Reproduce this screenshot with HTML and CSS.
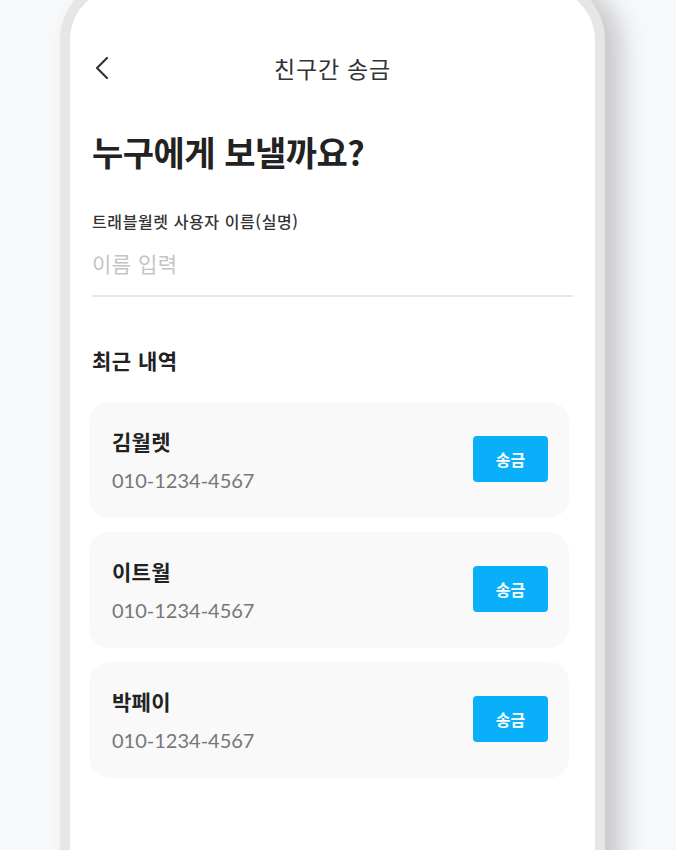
FILE: index.html
```html
<!DOCTYPE html>
<html lang="ko">
<head>
    <meta charset="UTF-8">
    <meta name="viewport" content="width=device-width, initial-scale=1.0">
    <title>친구간 송금</title>
    <link rel="stylesheet" href="styles.css">
</head>
<body>
    <div class="phone">
        <div class="screen">
            <header class="topbar">
                <button class="back" aria-label="뒤로">
                    <svg width="14" height="24" viewBox="0 0 14 24">
                        <polyline points="12,2 2,12 12,22" fill="none" stroke="#333" stroke-width="2.2" stroke-linecap="round" stroke-linejoin="round"/>
                    </svg>
                </button>
                <div class="topbar-title">친구간 송금</div>
            </header>

            <h1 class="heading">누구에게 보낼까요?</h1>

            <div class="field">
                <label for="name">트래블월렛 사용자 이름(실명)</label>
                <input type="text" id="name" placeholder="이름 입력">
            </div>

            <h2 class="section-title">최근 내역</h2>

            <!-- recent transfers -->
            <ul class="recent">
                <li class="card">
                    <div class="person">
                        <div class="person-name">김월렛</div>
                        <div class="person-phone">010-1234-4567</div>
                    </div>
                    <button class="send">송금</button>
                </li>
                <li class="card">
                    <div class="person">
                        <div class="person-name">이트월</div>
                        <div class="person-phone">010-1234-4567</div>
                    </div>
                    <button class="send">송금</button>
                </li>
                <li class="card">
                    <div class="person">
                        <div class="person-name">박페이</div>
                        <div class="person-phone">010-1234-4567</div>
                    </div>
                    <button class="send">송금</button>
                </li>
            </ul>
        </div>
    </div>
</body>
</html>
```

FILE: styles.css
```css
html, body {
    margin: 0;
    padding: 0;
    height: 100%;
    overflow: hidden;
}

body {
    background-color: #f7f8fa;
    font-family: "Noto Sans CJK KR", "Noto Sans", sans-serif;
    color: #222;
}

.phone {
    width: 525px;
    height: 900px;
    margin: -22px 0 0 60px;
    border: 10px solid #e6e6e6;
    border-bottom: none;
    border-radius: 62px 62px 0 0;
    background: #fff;
    box-shadow: 16px 6px 26px rgba(0, 0, 0, 0.2);
}

.screen {
    padding: 0 22px;
}

.topbar {
    position: relative;
    display: flex;
    align-items: center;
    justify-content: center;
    height: 52px;
    margin-top: 54px;
}

.back {
    position: absolute;
    left: 3px;
    top: 14px;
    padding: 0;
    border: none;
    background: none;
    line-height: 0;
}

.topbar-title {
    font-size: 23px;
    color: #333;
    letter-spacing: 0.8px;
}

.heading {
    margin: 34px 0 0;
    font-size: 34px;
    font-weight: 700;
    letter-spacing: -0.5px;
    color: #222;
    line-height: 48px;
}

.field {
    margin-top: 34px;
    border-bottom: 2px solid #e6e6e6;
}

.field label {
    display: block;
    font-size: 16px;
    font-weight: 500;
    color: #333;
    line-height: 22px;
    letter-spacing: 0.6px;
}

.field input {
    display: block;
    width: 100%;
    box-sizing: border-box;
    height: 63px;
    padding: 0 0 1px;
    border: none;
    outline: none;
    font-family: inherit;
    font-size: 21px;
    letter-spacing: 0.5px;
    color: #222;
    background: none;
}

.field input::placeholder {
    color: #c4c4c4;
}

.section-title {
    margin: 48px 0 0;
    font-size: 21px;
    font-weight: 700;
    line-height: 30px;
    letter-spacing: 0.5px;
    color: #222;
}

.recent {
    list-style: none;
    margin: 27px 4px 0 -3px;
    padding: 0;
    display: flex;
    flex-direction: column;
    gap: 14px;
}

.card {
    display: flex;
    align-items: center;
    justify-content: space-between;
    height: 116px;
    box-sizing: border-box;
    padding: 0 21px 0 23px;
    background: #f9f9f9;
    border-radius: 20px;
}

.person-name {
    font-size: 21px;
    font-weight: 700;
    color: #222;
    line-height: 28px;
    letter-spacing: 0.3px;
}

.person-phone {
    margin-top: 11px;
    font-family: Lato, "Noto Sans", sans-serif;
    font-size: 20px;
    color: #777;
    line-height: 28px;
}

.send {
    width: 75px;
    height: 46px;
    margin-top: -3px;
    border: none;
    border-radius: 4px;
    background: #0aaffa;
    color: #fff;
    font-family: inherit;
    font-size: 16px;
    font-weight: 700;
    cursor: pointer;
}
```
